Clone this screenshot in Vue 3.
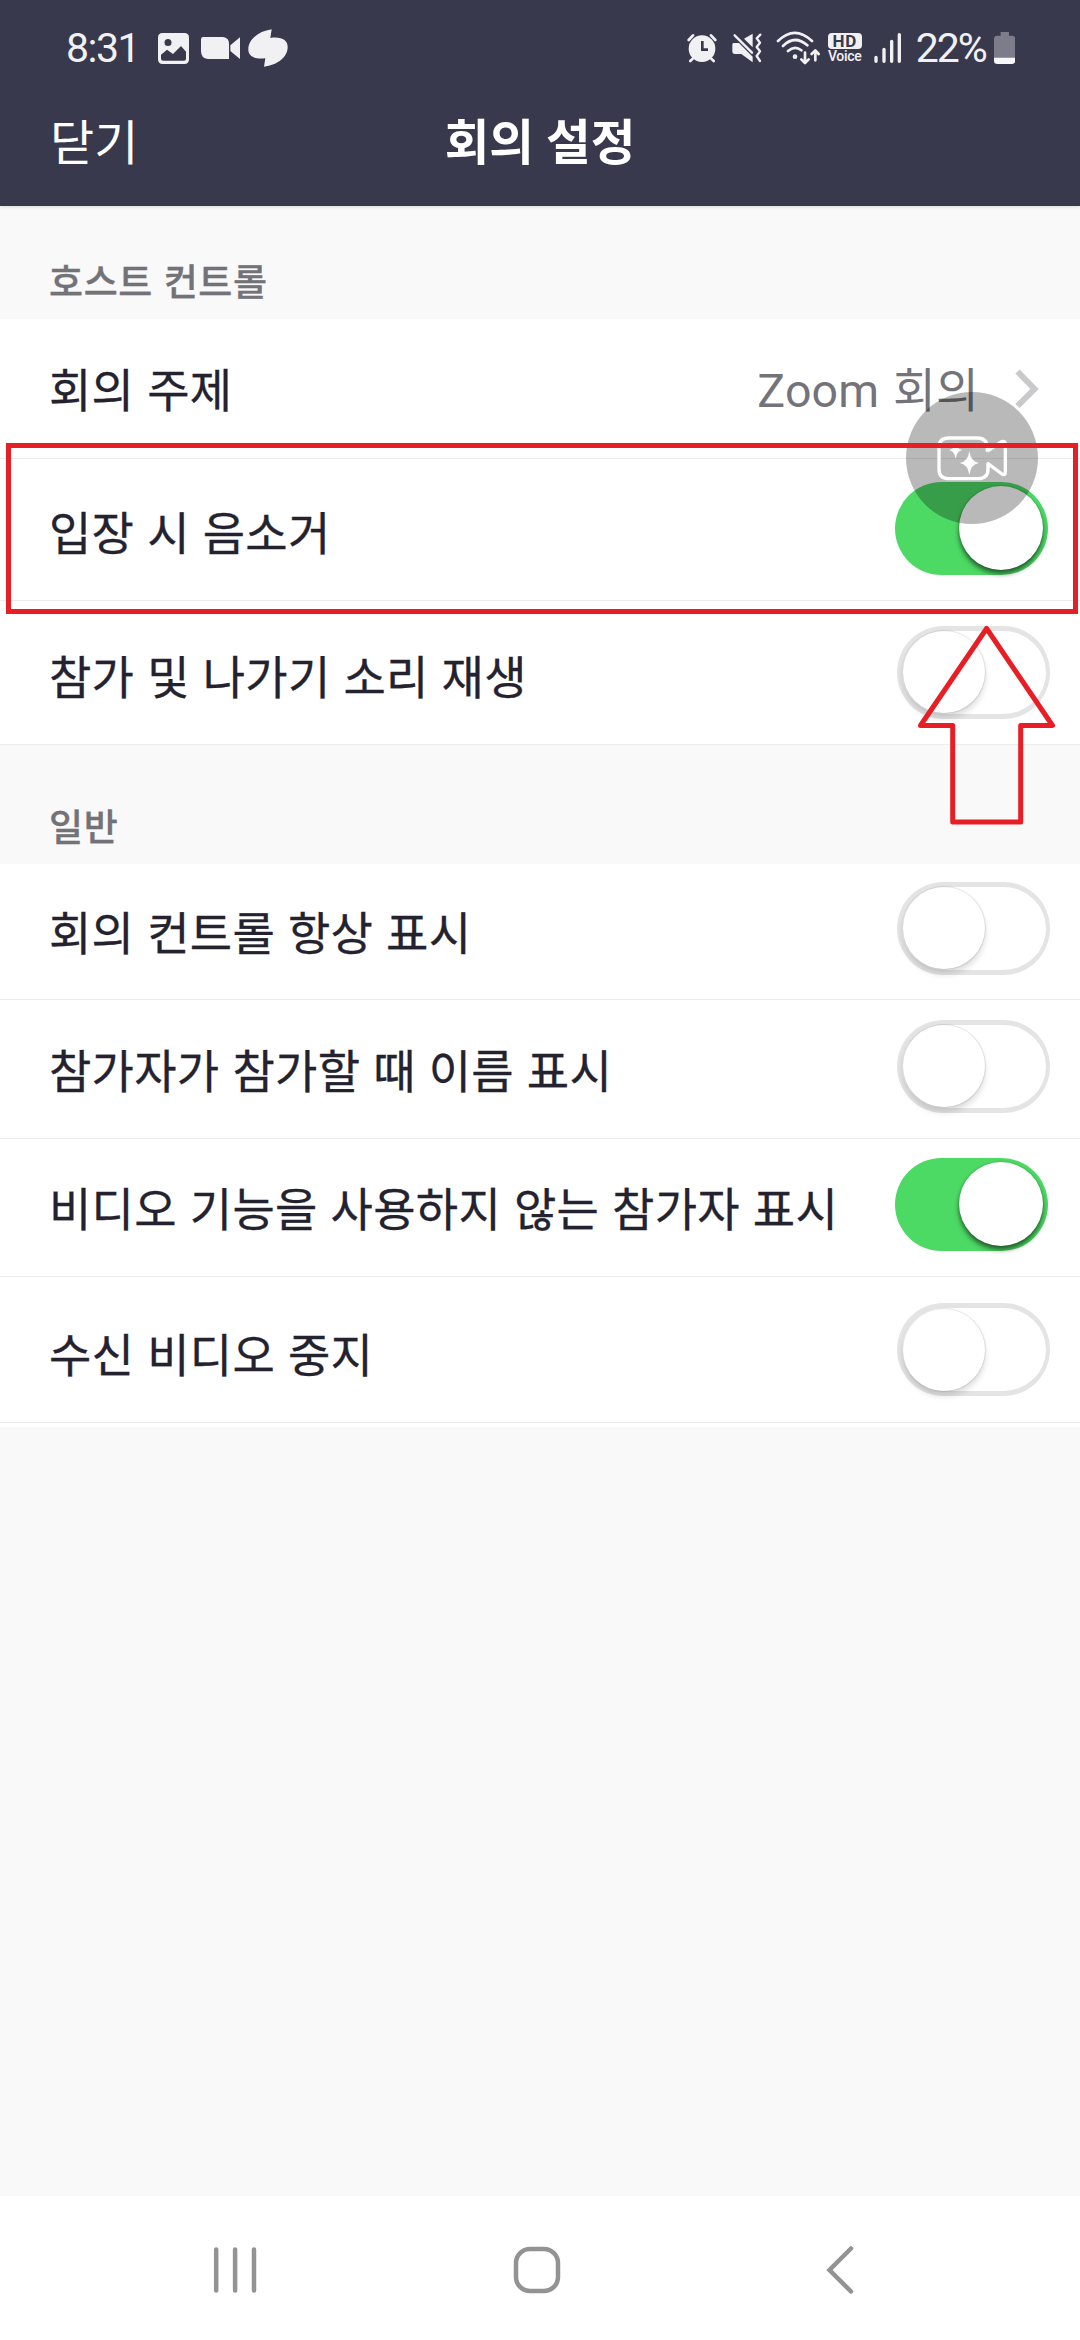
<script setup>
import { ref } from 'vue'

const topic = ref('Zoom 회의')

const hostRows = ref([
  { id: 'mute',  label: '입장 시 음소거',          on: true },
  { id: 'sound', label: '참가 및 나가기 소리 재생', on: false },
])

const generalRows = ref([
  { id: 'controls', label: '회의 컨트롤 항상 표시',                 on: false },
  { id: 'names',    label: '참가자가 참가할 때 이름 표시',           on: false },
  { id: 'novideo',  label: '비디오 기능을 사용하지 않는 참가자 표시', on: true },
  { id: 'incoming', label: '수신 비디오 중지',                     on: false },
])

function toggle(row) {
  row.on = !row.on
}
</script>

<template>
  <div class="screen">
    <header class="top">
      <!-- status bar -->
      <div class="status">
        <div class="status-left">
          <span class="clock">8:31</span>
          <svg class="i-photo" width="31" height="31" viewBox="354 69 93 93">
            <path fill="#f1f1f3" fill-rule="evenodd" d="M368 69H433Q447 69 447 83V148Q447 162 433 162H368Q354 162 354 148V83Q354 69 368 69ZM384 87A10.500 10.500 0 1 0 384 108A10.500 10.500 0 1 0 384 87ZM363 134V146Q363 152 370 152H432Q438 152 438 146V125L423 108L399 132L381 119Z"/>
          </svg>
          <svg class="i-video" width="39" height="22" viewBox="483 81 117 66">
            <path fill="#f1f1f3" d="M490 81H549Q567 83 567 101V147H504Q483 146 483 124V88Q483 81 490 81ZM571 106L600 82V147L571 123Z"/>
          </svg>
          <svg class="i-swirl" width="40" height="38" viewBox="623 58 120 114">
            <path fill="#f1f1f3" d="M694 59L690 85C724 80 742 92 742 112C742 142 712 166 671 171L675 146C642 150 624 140 624 119C624 89 654 65 694 59Z"/>
          </svg>
        </div>
        <div class="status-right">
          <svg class="i-alarm" width="30" height="30" viewBox="50 70 90 88">
            <circle cx="95" cy="116" r="40" fill="#f1f1f3"/>
            <path d="M55 90L68 76M135 90L122 76M68 145L60 153M122 145L130 153" stroke="#f1f1f3" stroke-width="8" stroke-linecap="round"/>
            <path d="M96 93V119H113" fill="none" stroke="#39394d" stroke-width="8"/>
          </svg>
          <svg class="i-mute" width="30" height="30" viewBox="186 69 90 90">
            <path fill="#f1f1f3" d="M190 99H207L248 140V157L214 132H195Q187 132 187 124V106Q187 99 190 99ZM222 86L248 71V112Z"/>
            <path d="M194 76L246 128" stroke="#f1f1f3" stroke-width="7" stroke-linecap="round"/>
            <path d="M271 74L260 85L270 98L260 111L270 124L260 138L270 153" fill="none" stroke="#f1f1f3" stroke-width="7" stroke-linejoin="round" stroke-linecap="round"/>
          </svg>
          <svg class="i-wifi" width="44" height="34" viewBox="316 62 132 102">
            <g fill="none" stroke="#f1f1f3" stroke-width="8" stroke-linecap="round" stroke-linejoin="round">
              <path d="M322 92Q372 43 424 92M337 107Q372 72 410 105M352 122Q372 104 392 120"/>
              <path d="M403 127V157M392 147L403 158L414 147M434 150V121M423 131L434 120L444 131"/>
            </g>
            <circle cx="373" cy="139" r="7" fill="#f1f1f3"/>
          </svg>
          <span class="hd"><b>HD</b><i>Voice</i></span>
          <svg class="i-signal" width="28" height="30" viewBox="608 67 84 90">
            <path d="M614 140V152M638 116V152M661 92V152M684 72V152" stroke="#f1f1f3" stroke-width="10" stroke-linecap="round"/>
          </svg>
          <span class="percent">22%</span>
          <svg class="i-battery" width="21.300" height="32" viewBox="968 66 64 96">
            <path fill="#7d7c8a" d="M988 66H1013V77H1022Q1032 77 1032 87V145H968V87Q968 77 978 77H988Z"/>
            <path fill="#f8f8fa" d="M968 143H1032V152Q1032 162 1022 162H978Q968 162 968 152Z"/>
          </svg>
        </div>
      </div>

      <div class="bar">
        <span class="close">닫기</span>
        <h1 class="title">회의 설정</h1>
      </div>
    </header>

    <main class="content">
      <h2 class="section section--host">호스트 컨트롤</h2>
      <div class="group">
        <div class="row row--topic">
          <span class="label">회의 주제</span>
          <span class="value">{{ topic }}</span>
          <svg class="chevron" width="24" height="40" viewBox="0 0 24 40">
            <path d="M2.500 2.500L19.500 20L2.500 37" fill="none" stroke="#c9c9cb" stroke-width="6"/>
          </svg>
        </div>
        <div v-for="row in hostRows" :key="row.id" class="row" :class="'row--' + row.id">
          <span class="label">{{ row.label }}</span>
          <span class="switch" :class="{ 'switch--on': row.on }" @click="toggle(row)">
            <span class="knob"></span>
          </span>
        </div>
      </div>

      <h2 class="section section--general">일반</h2>
      <div class="group group--general">
        <div v-for="row in generalRows" :key="row.id" class="row" :class="'row--' + row.id">
          <span class="label">{{ row.label }}</span>
          <span class="switch" :class="{ 'switch--on': row.on }" @click="toggle(row)">
            <span class="knob"></span>
          </span>
        </div>
      </div>
    </main>

    <!-- android navigation -->
    <nav class="nav">
      <svg class="nav-recent" width="44" height="50" viewBox="0 0 44 50">
        <path d="M3.200 4.500V45.500M22.100 4.500V45.500M41 4.500V45.500" stroke="#939393" stroke-width="4.500" stroke-linecap="round"/>
      </svg>
      <svg class="nav-home" width="48" height="50" viewBox="0 0 48 50">
        <rect x="3" y="4" width="42" height="42" rx="14" fill="none" stroke="#939393" stroke-width="4.500"/>
      </svg>
      <svg class="nav-back" width="30" height="50" viewBox="0 0 30 50">
        <path d="M26 3.500L4.500 25L26 46.500" fill="none" stroke="#939393" stroke-width="4.500" stroke-linecap="round"/>
      </svg>
    </nav>

    <!-- floating camera effects button -->
    <div class="float">
      <svg width="70" height="45" viewBox="591 287 210 135">
        <path d="M742 334V325Q742 293 712 293H626Q597 293 597 322V386Q597 415 626 415H714Q744 415 744 386V370L786 401Q796 407 796 396V312Q796 300 785 304L742 332" fill="none" stroke="#fff" stroke-width="10" stroke-linejoin="round"/>
        <path d="M688 332Q692 364 717 368Q692 372 688 404Q684 372 659 368Q684 364 688 332ZM647 305Q650 326 667 329Q650 332 647 355Q644 332 627 329Q644 326 647 305Z" fill="#fff"/>
      </svg>
    </div>

    <!-- highlight marks -->
    <div class="mark-box"></div>
    <svg class="mark-arrow" width="140" height="204" viewBox="917 623 140 204">
      <path d="M986.600 628.500L1052.500 725.500H1020.700V822H952.700V725.500H920.500Z" fill="none" stroke="#e81e26" stroke-width="5" stroke-linejoin="round"/>
    </svg>
  </div>
</template>

<style>
body { margin: 0; background: #f9f9f9; }
</style>

<style scoped>
.screen {
  position: relative; display: flex; flex-direction: column;
  width: 1080px; height: 2340px; overflow: hidden;
  background: #f9f9f9; color: #23222e;
  font-family: Roboto, "Noto Sans CJK KR", sans-serif;
}
svg { display: block; flex-shrink: 0; }

/* ── Header ── */
.top {
  height: 206px; flex-shrink: 0; background: #39394d; color: #fff;
  box-shadow: 0 1px 3px rgba(0,0,0,0.12);
}
.status {
  display: flex; justify-content: space-between; align-items: center;
  height: 96px; padding: 0 65px 0 66px; color: #f1f1f3; box-sizing: border-box;
}
.status-left, .status-right { display: flex; align-items: center; }
.clock   { width: 92px; font-size: 41px; line-height: 48px; letter-spacing: -1.5px; white-space: nowrap; }
.i-video { margin-left: 12px; }
.i-swirl { margin-left: 8px; }
.i-mute  { margin-left: 15px; }
.i-wifi  { margin-left: 14px; }
.hd {
  display: flex; flex-direction: column; align-items: center;
  width: 34px; margin-left: 8px;
}
.hd b {
  width: 34px; height: 16px; border-radius: 4px; background: #f1f1f3; color: #39394d;
  font-size: 17px; line-height: 17px; text-align: center; letter-spacing: 0.8px;
}
.hd i { font-size: 14px; line-height: 14px; font-style: normal; font-weight: 500; letter-spacing: -0.3px; }
.i-signal { margin-left: 12px; }
.percent { width: 78px; margin-left: 14px; font-size: 41px; line-height: 48px; letter-spacing: -2px; white-space: nowrap; }

.bar {
  display: grid; grid-template-columns: 1fr auto 1fr; align-items: center;
  height: 94px; padding: 1px 50px 0;
}
.close { font-size: 48px; line-height: 70px; }
.title { margin: 0; font-size: 48.5px; line-height: 70px; font-weight: 700; }

/* ── Sections ── */
.content { flex: 1; }
.section {
  display: flex; align-items: flex-end; box-sizing: border-box; margin: 0; padding: 0 49px;
  font-size: 37px; line-height: 50px; font-weight: 500; color: #737278;
  letter-spacing: 0.6px; word-spacing: 1px; -webkit-text-stroke: 0.3px #737278;
}
.section--host    { height: 113px; padding-bottom: 10px; }
.section--general { height: 119px; padding-bottom: 10px; }
.group { background: #fff; }
.group--general { padding-bottom: 4px; }

/* ── Rows ── */
.row {
  display: flex; align-items: center; box-sizing: border-box;
  padding: 0 30px 0 49px; border-bottom: 1px solid #ececec;
}
.label {
  flex: 1; padding-top: 12px; font-size: 46px; line-height: 60px; white-space: nowrap;
  letter-spacing: 0.3px; word-spacing: 1.2px; -webkit-text-stroke: 0.3px #23222e;
}
.row--topic    { height: 140px; padding-right: 41px; }
.row--topic .label { padding-top: 4px; }
.row--mute     { height: 142px; padding-bottom: 3px; }
.row--sound    { height: 144px; padding-bottom: 1px; }
.row--controls { height: 136px; padding-bottom: 7px; }
.row--names    { height: 139px; padding-bottom: 6px; }
.row--novideo  { height: 138px; padding-bottom: 7px; }
.row--incoming { height: 146px; }

.value {
  padding-top: 5px; font-size: 46.5px; line-height: 60px; color: #747379;
  letter-spacing: 0.2px; word-spacing: 2px;
}
.chevron { margin-left: 36px; }

/* ── Switch ── */
.switch {
  display: flex; align-items: center; box-sizing: border-box; flex-shrink: 0;
  width: 153px; height: 93px; padding-left: 1px;
  border: 5px solid #e4e4e4; border-right-width: 4px; border-radius: 47px; background: #fff;
}
.knob {
  width: 82px; height: 82px; border-radius: 50%; background: #fff;
  box-shadow: 0 0 1px 1px rgba(0,0,0,0.1), 0 5px 6px rgba(0,0,0,0.14);
}
.switch--on {
  margin-right: 2px; border: 0; padding: 0 5px 0 0;
  justify-content: flex-end; background: #4cd964;
}
.switch--on .knob {
  width: 84px; height: 84px;
  box-shadow: 0 0 2px rgba(0,0,0,0.25), 0 4px 5px rgba(0,0,0,0.55);
}

/* ── Navigation ── */
.nav {
  display: flex; align-items: center; box-sizing: border-box;
  height: 144px; padding: 4px 0 0 213px; background: #fff;
}
.nav-home { margin-left: 256px; }
.nav-back { margin-left: 264px; }

/* ── Overlays ── */
.float {
  position: absolute; left: 906px; top: 392px; width: 132px; height: 132px;
  display: flex; align-items: center; justify-content: center;
  border-radius: 50%; background: rgba(0,0,0,0.275);
}
.float svg { margin-top: 1px; }
.mark-box {
  position: absolute; left: 6px; top: 443px; width: 1072px; height: 171px;
  box-sizing: border-box; border: 5px solid #e81e26;
}
.mark-arrow { position: absolute; left: 917px; top: 623px; }
</style>
